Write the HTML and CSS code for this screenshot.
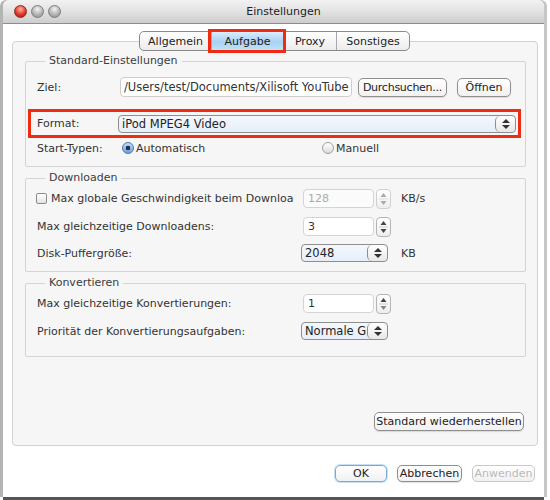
FILE: index.html
```html
<!DOCTYPE html>
<html lang="de">
<head>
  <meta charset="UTF-8">
  <title>Einstellungen</title>
  <link rel="stylesheet" href="styles.css">
</head>
<body>

  <div class="window">
    <div class="titlebar">
      <div class="lights">
        <span class="light light-red"></span>
        <span class="light"></span>
        <span class="light"></span>
      </div>
      <div class="title">Einstellungen</div>
    </div>

    <div class="content">
      <div class="tabs">
        <span class="tab tab-general">Allgemein</span>
        <span class="tab tab-task active">Aufgabe</span>
        <span class="tab tab-proxy">Proxy</span>
        <span class="tab tab-misc">Sonstiges</span>
      </div>

      <div class="panel">
        <fieldset class="group group-standard">
          <legend>Standard-Einstellungen</legend>
          <div class="row row-target">
            <span class="label label-target">Ziel:</span>
            <span class="field field-path">/Users/test/Documents/Xilisoft YouTube Video Converter</span>
            <span class="btn btn-browse">Durchsuchen...</span>
            <span class="btn btn-open">Öffnen</span>
          </div>
          <div class="row row-format">
            <span class="label label-format">Format:</span>
            <span class="select select-format">
              <span class="select-text">iPod MPEG4 Video</span>
              <span class="select-arrows">
                <svg width="18" height="16" viewBox="0 0 18 16"><polygon points="9,3 13,7 5,7" fill="#333"/><polygon points="5,9 13,9 9,13" fill="#333"/></svg>
              </span>
            </span>
          </div>
          <div class="row row-start">
            <span class="label label-start">Start-Typen:</span>
            <span class="option option-auto"><span class="radio checked"></span>Automatisch</span>
            <span class="option"><span class="radio"></span>Manuell</span>
          </div>
        </fieldset>

        <fieldset class="group group-downloads">
          <legend>Downloaden</legend>
          <div class="row row-first">
            <span class="label label-wide">
              <span class="checkbox"></span>
              <span class="check-text">Max globale Geschwindigkeit beim Downloaden</span>
            </span>
            <span class="field field-num disabled">128</span>
            <span class="stepper disabled">
              <svg width="13" height="18" viewBox="0 0 13 18"><polygon points="6.5,3 9.5,7 3.5,7" fill="#aaa"/><line x1="2" y1="9" x2="11" y2="9" stroke="#ddd"/><polygon points="3.5,11 9.5,11 6.5,15" fill="#aaa"/></svg>
            </span>
            <span class="unit">KB/s</span>
          </div>
          <div class="row row-next">
            <span class="label label-wide">Max gleichzeitige Downloadens:</span>
            <span class="field field-num">3</span>
            <span class="stepper">
              <svg width="13" height="18" viewBox="0 0 13 18"><polygon points="6.5,3 9.5,7 3.5,7" fill="#444"/><line x1="2" y1="9" x2="11" y2="9" stroke="#ccc"/><polygon points="3.5,11 9.5,11 6.5,15" fill="#444"/></svg>
            </span>
          </div>
          <div class="row row-combo">
            <span class="label label-combo">Disk-Puffergröße:</span>
            <span class="select select-small">
              <span class="select-text">2048</span>
              <span class="select-arrows">
                <svg width="18" height="16" viewBox="0 0 18 16"><polygon points="9,3 13,7 5,7" fill="#333"/><polygon points="5,9 13,9 9,13" fill="#333"/></svg>
              </span>
            </span>
            <span class="unit unit-kb">KB</span>
          </div>
        </fieldset>

        <fieldset class="group group-convert">
          <legend>Konvertieren</legend>
          <div class="row row-first">
            <span class="label label-wide">Max gleichzeitige Konvertierungen:</span>
            <span class="field field-num">1</span>
            <span class="stepper">
              <svg width="13" height="18" viewBox="0 0 13 18"><polygon points="6.5,3 9.5,7 3.5,7" fill="#444"/><line x1="2" y1="9" x2="11" y2="9" stroke="#ccc"/><polygon points="3.5,11 9.5,11 6.5,15" fill="#888"/></svg>
            </span>
          </div>
          <div class="row row-next row-combo">
            <span class="label label-combo">Priorität der Konvertierungsaufgaben:</span>
            <span class="select select-small">
              <span class="select-text">Normale Größe</span>
              <span class="select-arrows">
                <svg width="18" height="16" viewBox="0 0 18 16"><polygon points="9,3 13,7 5,7" fill="#333"/><polygon points="5,9 13,9 9,13" fill="#333"/></svg>
              </span>
            </span>
          </div>
        </fieldset>

        <span class="btn btn-reset">Standard wiederherstellen</span>
      </div>

      <div class="actions">
        <span class="btn btn-ok">OK</span>
        <span class="btn btn-cancel">Abbrechen</span>
        <span class="btn btn-apply disabled">Anwenden</span>
      </div>
    </div>
  </div>

</body>
</html>
```

FILE: styles.css
```css
html, body {
  height: 100%;
  overflow: hidden;
}

body {
  margin: 0;
  background-color: #fff;
  color: #333;
  font-family: "DejaVu Sans", sans-serif;
  font-size: 11px;
}

.window {
  margin-left: 3px;
  width: 541px;
  height: 497px;
  background-color: #fff;
  border-radius: 6px 6px 0 0;
  box-shadow: -3px 0 0 #b4b4b4, 0 3px 0 #555, 3px 0 0 #c6c6c6;
  display: flex;
  flex-direction: column;
}

/* title bar */

.titlebar {
  height: 23px;
  display: flex;
  align-items: center;
  background: linear-gradient(#f2f2f2, #e2e2e2 50%, #cdcdcd);
  border-bottom: 1px solid #8e8e8e;
  border-radius: 6px 6px 0 0;
}

.lights {
  width: 60px;
  padding-left: 11px;
  box-sizing: border-box;
  display: flex;
  gap: 4px;
}

.light {
  width: 13px;
  height: 13px;
  box-sizing: border-box;
  border-radius: 50%;
  border: 1px solid #7d7d7d;
  background: radial-gradient(circle at 50% 30%, #f4f4f4, #b4b4b4 55%, #8c8c8c);
}

.light-red {
  border-color: #8c2a20;
  background: radial-gradient(circle at 50% 30%, #ffb3a6, #dc3a2b 55%, #9e150b);
}

.title {
  flex: 1;
  padding-right: 40px;
  text-align: center;
  color: #222;
}

/* content */

.content {
  flex: 1;
  padding: 7px 6px 0 9px;
  display: flex;
  flex-direction: column;
}

.tabs {
  align-self: center;
  display: flex;
  height: 18px;
  border: 1px solid #8a8a8a;
  border-radius: 5px;
  background: linear-gradient(#ffffff, #ececec);
  position: relative;
  z-index: 1;
  margin-left: -1px;
}

.tab {
  display: flex;
  align-items: center;
  justify-content: center;
  border-left: 1px solid #a8a8a8;
  color: #222;
  box-sizing: border-box;
}

.tab:first-child {
  border-left: none;
}

.tab-general { width: 71px; }
.tab-task { width: 72px; }
.tab-proxy { width: 53px; }
.tab-misc { width: 73px; }

.tab.active {
  background: linear-gradient(#d9ecfc, #a9d1f4 55%, #c2e1fa);
  outline: 3px solid #ef2b12;
  outline-offset: 0;
  position: relative;
}

.panel {
  margin-top: -10px;
  height: 405px;
  box-sizing: border-box;
  border: 1px solid #d2d2d2;
  border-radius: 4px;
  background-color: #f6f6f7;
  padding: 12px 11px 14px 12px;
  display: flex;
  flex-direction: column;
}

.group {
  margin: 0;
  min-width: 0;
  border: 1px solid #d4d4d4;
  border-radius: 2px;
  padding: 0 11px 10px 11px;
}

.group legend {
  margin-left: 8px;
  padding: 0 4px;
  line-height: 14px;
  color: #3c3c3c;
}

.group-downloads {
  margin-top: 4px;
  padding-bottom: 9px;
}

.group-convert {
  margin-top: 4px;
  padding-bottom: 16px;
}

.row {
  display: flex;
  align-items: center;
}

.label {
  flex-shrink: 0;
  white-space: nowrap;
}

/* standard settings */

.row-target {
  margin-top: 9px;
  height: 20px;
}

.label-target { width: 83px; }

.field {
  box-sizing: border-box;
  background-color: #fff;
  border: 1px solid #cdcdcd;
  border-radius: 4px;
  white-space: nowrap;
  overflow: hidden;
  display: flex;
  align-items: center;
  color: #333;
}

.field-path {
  width: 232px;
  height: 20px;
  padding-left: 3px;
  font-size: 11.5px;
}

.btn {
  box-sizing: border-box;
  height: 19px;
  display: flex;
  align-items: center;
  justify-content: center;
  white-space: nowrap;
  background: linear-gradient(#ffffff, #f1f1f1);
  border: 1px solid #8f8f8f;
  border-radius: 5px;
  box-shadow: 0 1px 1px rgba(0, 0, 0, 0.12);
  color: #222;
}

.btn-browse {
  margin-left: 6px;
  width: 89px;
  letter-spacing: -0.25px;
}

.btn-open {
  margin-left: 10px;
  width: 54px;
}

.row-format {
  margin: 12px -7px 0 -9px;
  height: 29px;
  box-sizing: border-box;
  border: 3px solid #ef2b12;
  padding-left: 6px;
}

.label-format { width: 81px; }

.select {
  box-sizing: border-box;
  height: 18px;
  display: flex;
  align-items: center;
  background: linear-gradient(#f4f8fd, #e6eef8);
  border: 1px solid #8e8e8e;
  border-radius: 4px;
  overflow: hidden;
  color: #222;
}

.select-text {
  flex: 1;
  min-width: 0;
  padding-left: 3px;
  white-space: nowrap;
  overflow: hidden;
}

.select-format {
  width: 398px;
  font-size: 11.5px;
}

.select-arrows {
  flex-shrink: 0;
  width: 19px;
  height: 16px;
  display: flex;
  align-items: center;
  justify-content: center;
  border-left: 1px solid #8e8e8e;
  border-radius: 5px;
  background: linear-gradient(#ffffff, #e8e8e8);
}

.row-start {
  margin-top: 2px;
  height: 16px;
}

.label-start { width: 85px; }

.option {
  display: flex;
  align-items: center;
  gap: 2px;
}

.option-auto { width: 200px; }

.radio {
  width: 10px;
  height: 10px;
  border-radius: 50%;
  border: 1px solid #a0a0a0;
  background: linear-gradient(#ffffff, #dcdcdc);
}

.radio.checked {
  border-color: #4f78ab;
  background: radial-gradient(circle, #1c2f52 0 2px, transparent 2.6px), linear-gradient(#c4dcf5, #6d9fd8);
}

/* downloads and converting */

.row-first {
  margin-top: 4px;
  height: 19px;
}

.row-next {
  margin-top: 9px;
  height: 19px;
}

.row-combo {
  margin-top: 8px;
  height: 18px;
}

.group-convert .row-combo {
  margin-top: 9px;
}

.label-wide {
  width: 266px;
  display: flex;
  align-items: center;
}

.label-combo { width: 264px; }

.checkbox {
  flex-shrink: 0;
  margin-left: -1px;
  width: 11px;
  height: 11px;
  box-sizing: border-box;
  border: 1px solid #8c8c8c;
  border-radius: 2px;
  background: linear-gradient(#ffffff, #e4e4e4);
}

.check-text {
  margin-left: 4px;
  width: 243px;
  overflow: hidden;
}

.field-num {
  width: 71px;
  height: 19px;
  padding-left: 4px;
  border-color: #d4d4d4;
}

.field-num.disabled {
  background-color: #fbfbfb;
  color: #aaa;
}

.stepper {
  margin-left: 2px;
  width: 15px;
  height: 20px;
  box-sizing: border-box;
  border: 1px solid #b4b4b4;
  border-radius: 4px;
  background: linear-gradient(#ffffff, #eeeeee);
  display: flex;
  align-items: center;
  justify-content: center;
}

.stepper.disabled {
  border-color: #d0d0d0;
}

.unit {
  margin-left: 10px;
  color: #333;
}

.unit-kb {
  margin-left: 13px;
}

.select-small {
  width: 87px;
  font-size: 11.5px;
}

/* buttons */

.btn-reset {
  margin-top: auto;
  margin-right: 2px;
  align-self: flex-end;
  width: 150px;
}

.actions {
  margin-top: 19px;
  padding-right: 3px;
  display: flex;
  justify-content: flex-end;
  gap: 10px;
}

.actions .btn {
  height: 17px;
}

.btn-ok {
  width: 52px;
  border-color: #79a9da;
  box-shadow: 0 0 0 1px #c7e0f7;
}

.btn-cancel { width: 65px; }

.btn-apply { width: 63px; }

.btn.disabled {
  color: #b9b9b9;
  border-color: #c8c8c8;
  box-shadow: none;
}
```
